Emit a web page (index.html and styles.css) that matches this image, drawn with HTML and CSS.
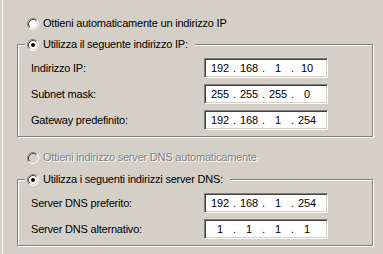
FILE: index.html
```html
<!DOCTYPE html>
<html lang="it">
<head>
    <meta charset="UTF-8">
    <title>Proprietà TCP/IP</title>
    <link rel="stylesheet" href="styles.css">
</head>
<body>
    <div class="panel">
        <div class="option">
            <svg class="radio" width="12" height="12" viewBox="0 0 12 12">
                <circle cx="6" cy="6" r="4.5" fill="#fff"/>
                <path d="M2.82 9.18 A4.5 4.5 0 0 1 9.18 2.82" fill="none" stroke="#404040"/>
                <path d="M9.18 2.82 A4.5 4.5 0 0 1 2.82 9.18" fill="none" stroke="#d4d0c8"/>
                <path d="M2.11 9.89 A5.5 5.5 0 0 1 9.89 2.11" fill="none" stroke="#808080"/>
                <path d="M9.89 2.11 A5.5 5.5 0 0 1 2.11 9.89" fill="none" stroke="#fff"/>
            </svg>
            <span>Ottieni automaticamente un indirizzo IP</span>
        </div>

        <fieldset class="group">
            <legend class="option">
                <svg class="radio" width="12" height="12" viewBox="0 0 12 12">
                    <circle cx="6" cy="6" r="4.5" fill="#fff"/>
                    <path d="M2.82 9.18 A4.5 4.5 0 0 1 9.18 2.82" fill="none" stroke="#404040"/>
                    <path d="M9.18 2.82 A4.5 4.5 0 0 1 2.82 9.18" fill="none" stroke="#d4d0c8"/>
                    <path d="M2.11 9.89 A5.5 5.5 0 0 1 9.89 2.11" fill="none" stroke="#808080"/>
                    <path d="M9.89 2.11 A5.5 5.5 0 0 1 2.11 9.89" fill="none" stroke="#fff"/>
                    <circle cx="6" cy="6" r="2" fill="#000"/>
                </svg>
                <span>Utilizza il seguente indirizzo IP:</span>
            </legend>
            <div class="rows">
                <div class="row">
                    <span>Indirizzo IP:</span>
                    <div class="ip"><span class="seg">192</span><span class="dot">.</span><span class="seg">168</span><span class="dot">.</span><span class="seg">1</span><span class="dot">.</span><span class="seg">10</span></div>
                </div>
                <div class="row">
                    <span>Subnet mask:</span>
                    <div class="ip"><span class="seg">255</span><span class="dot">.</span><span class="seg">255</span><span class="dot">.</span><span class="seg">255</span><span class="dot">.</span><span class="seg">0</span></div>
                </div>
                <div class="row">
                    <span>Gateway predefinito:</span>
                    <div class="ip"><span class="seg">192</span><span class="dot">.</span><span class="seg">168</span><span class="dot">.</span><span class="seg">1</span><span class="dot">.</span><span class="seg">254</span></div>
                </div>
            </div>
        </fieldset>

        <div class="option option-dns disabled">
            <svg class="radio" width="12" height="12" viewBox="0 0 12 12">
                <circle cx="6" cy="6" r="4.5" fill="#d4d0c8"/>
                <path d="M2.82 9.18 A4.5 4.5 0 0 1 9.18 2.82" fill="none" stroke="#404040"/>
                <path d="M9.18 2.82 A4.5 4.5 0 0 1 2.82 9.18" fill="none" stroke="#d4d0c8"/>
                <path d="M2.11 9.89 A5.5 5.5 0 0 1 9.89 2.11" fill="none" stroke="#808080"/>
                <path d="M9.89 2.11 A5.5 5.5 0 0 1 2.11 9.89" fill="none" stroke="#fff"/>
            </svg>
            <span>Ottieni indirizzo server DNS automaticamente</span>
        </div>

        <fieldset class="group group-dns">
            <legend class="option">
                <svg class="radio" width="12" height="12" viewBox="0 0 12 12">
                    <circle cx="6" cy="6" r="4.5" fill="#fff"/>
                    <path d="M2.82 9.18 A4.5 4.5 0 0 1 9.18 2.82" fill="none" stroke="#404040"/>
                    <path d="M9.18 2.82 A4.5 4.5 0 0 1 2.82 9.18" fill="none" stroke="#d4d0c8"/>
                    <path d="M2.11 9.89 A5.5 5.5 0 0 1 9.89 2.11" fill="none" stroke="#808080"/>
                    <path d="M9.89 2.11 A5.5 5.5 0 0 1 2.11 9.89" fill="none" stroke="#fff"/>
                    <circle cx="6" cy="6" r="2" fill="#000"/>
                </svg>
                <span>Utilizza i seguenti indirizzi server DNS:</span>
            </legend>
            <div class="rows">
                <div class="row">
                    <span>Server DNS preferito:</span>
                    <div class="ip"><span class="seg">192</span><span class="dot">.</span><span class="seg">168</span><span class="dot">.</span><span class="seg">1</span><span class="dot">.</span><span class="seg">254</span></div>
                </div>
                <div class="row">
                    <span>Server DNS alternativo:</span>
                    <div class="ip"><span class="seg">1</span><span class="dot">.</span><span class="seg">1</span><span class="dot">.</span><span class="seg">1</span><span class="dot">.</span><span class="seg">1</span></div>
                </div>
            </div>
        </fieldset>
    </div>
</body>
</html>
```

FILE: styles.css
```css
body {
    margin: 0;
    padding-left: 2px;
    background-color: #d4d0c8;
    font-family: "Liberation Sans", Arial, sans-serif;
    font-size: 11px;
    letter-spacing: -0.2px;
    color: #000;
}
.panel {
    height: 254px;
    box-sizing: border-box;
    border-left: 1px solid #fff;
    padding: 16px 0 0 14px;
}
.option {
    display: flex;
    align-items: center;
    gap: 4px;
    height: 15px;
    line-height: 15px;
    padding-left: 10px;
    white-space: nowrap;
}
.radio {
    flex: none;
}
.disabled {
    color: #808080;
    text-shadow: 1px 1px 0 #fff;
}
.group {
    width: 356px;
    box-sizing: border-box;
    margin: 6px 0 0 0;
    padding: 6px 0;
    border: 1px solid #808080;
    box-shadow: inset 1px 1px 0 #fff, 1px 1px 0 #fff;
    min-inline-size: 0;
}
.group legend {
    margin-left: 7px;
    padding: 0 7px 0 2px;
    background-color: #d4d0c8;
}
.group-dns {
    margin-top: 7px;
}
.option-dns {
    margin-top: 13px;
}
.rows {
    display: flex;
    flex-direction: column;
    gap: 6px;
    padding-left: 13px;
}
.row {
    display: grid;
    grid-template-columns: 173px 124px;
    align-items: center;
}
.ip {
    display: flex;
    height: 20px;
    box-sizing: border-box;
    padding-left: 2px;
    border: 1px solid;
    border-color: #808080 #fff #fff #808080;
    box-shadow: inset 1px 1px 0 #404040, inset -1px -1px 0 #d4d0c8;
    background-color: #fff;
    line-height: 18px;
}
.seg {
    width: 26px;
    text-align: center;
}
.dot {
    width: 3px;
    text-align: center;
}
```
